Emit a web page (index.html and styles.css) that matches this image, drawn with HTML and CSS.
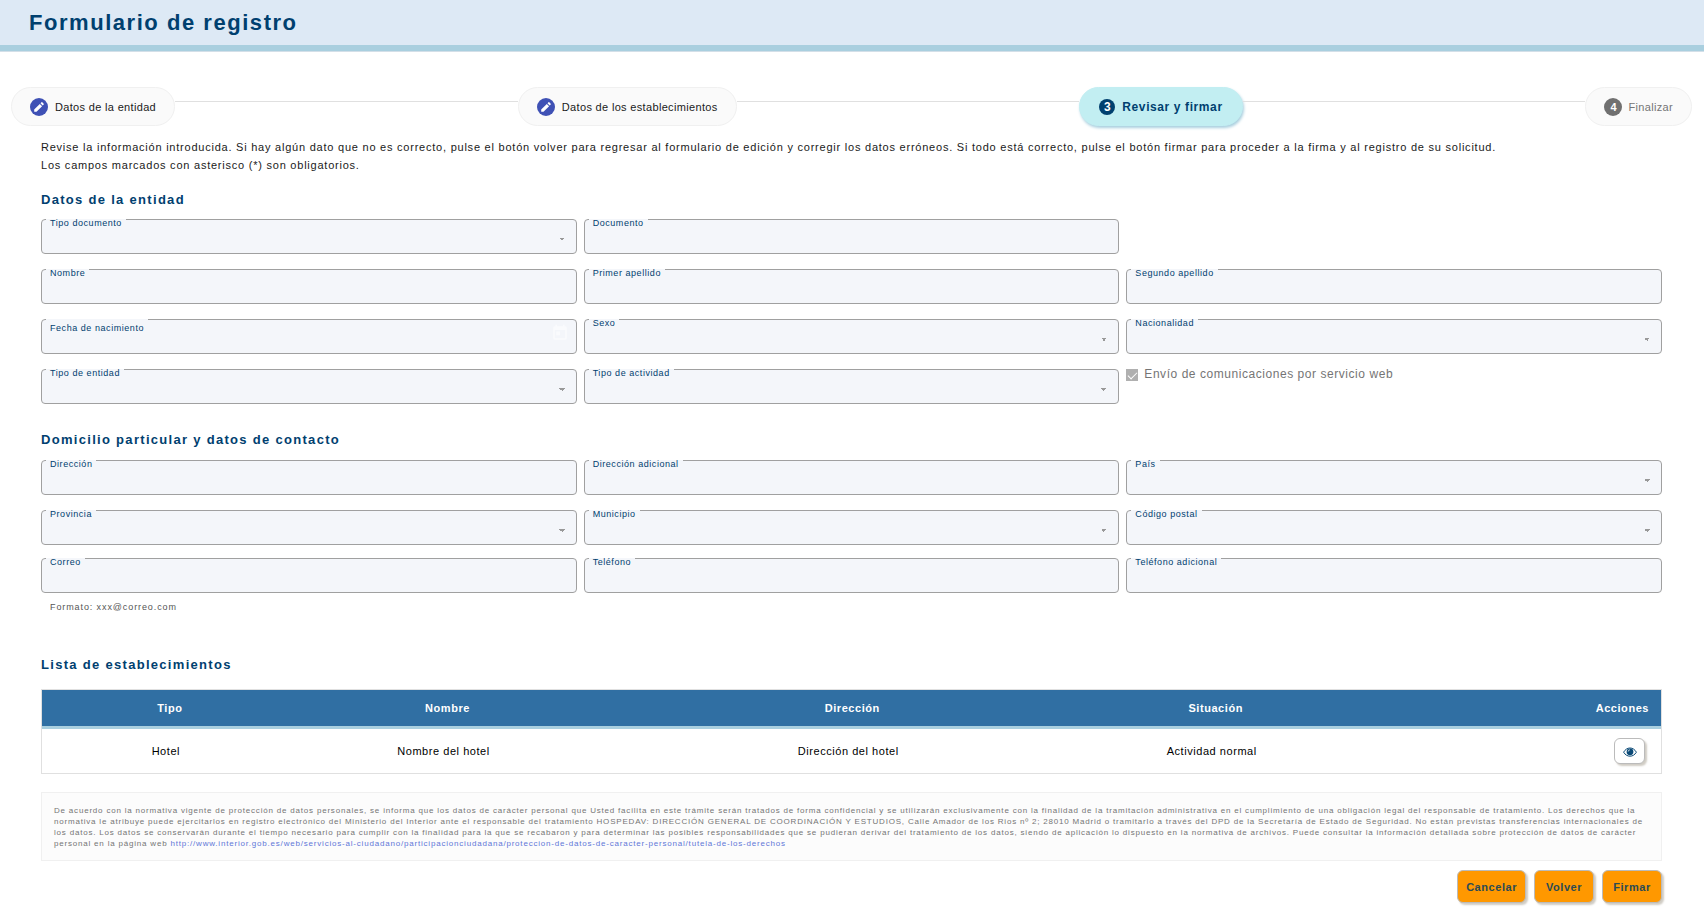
FILE: index.html
```html
<!DOCTYPE html>
<html lang="es">
<head>
<meta charset="utf-8">
<meta name="viewport" content="width=device-width, initial-scale=1">
<title>Formulario de registro</title>
<link rel="stylesheet" href="styles.css">
</head>
<body>
<header class="page-header">
  <h1 class="page-title">Formulario de registro</h1>
</header>

<main>
  <ol class="stepper">
    <li class="step step-done">
      <svg class="step-icon" viewBox="0 0 18 18" aria-hidden="true"><circle cx="9" cy="9" r="9" fill="#3f51b5"/><path d="M4.200 11.500v2.300h2.300l5.600-5.600-2.300-2.300zM13.700 6.500a.6.6 0 0 0 0-.8l-1.400-1.400a.6.6 0 0 0-.8 0l-1 1 2.200 2.200z" fill="#fff"/></svg>
      <span>Datos de la entidad</span>
    </li>
    <li class="step-line" role="presentation"></li>
    <li class="step step-done">
      <svg class="step-icon" viewBox="0 0 18 18" aria-hidden="true"><circle cx="9" cy="9" r="9" fill="#3f51b5"/><path d="M4.200 11.500v2.300h2.300l5.600-5.600-2.300-2.300zM13.700 6.500a.6.6 0 0 0 0-.8l-1.400-1.400a.6.6 0 0 0-.8 0l-1 1 2.200 2.200z" fill="#fff"/></svg>
      <span>Datos de los establecimientos</span>
    </li>
    <li class="step-line" role="presentation"></li>
    <li class="step step-current" aria-current="step">
      <span class="step-number">3</span>
      <span>Revisar y firmar</span>
    </li>
    <li class="step-line" role="presentation"></li>
    <li class="step step-pending">
      <span class="step-number">4</span>
      <span>Finalizar</span>
    </li>
  </ol>

  <div class="content">
    <p class="intro">Revise la información introducida. Si hay algún dato que no es correcto, pulse el botón volver para regresar al formulario de edición y corregir los datos erróneos. Si todo está correcto, pulse el botón firmar para proceder a la firma y al registro de su solicitud.<br>Los campos marcados con asterisco (*) son obligatorios.</p>

    <section>
      <h2 class="section-title">Datos de la entidad</h2>
      <div class="fields">
        <div class="field"><label for="tipo-doc">Tipo documento</label><select id="tipo-doc" class="control select" disabled></select></div>
        <div class="field"><label for="documento">Documento</label><input id="documento" class="control" type="text" disabled></div>

        <div class="field field-first"><label for="nombre">Nombre</label><input id="nombre" class="control" type="text" disabled></div>
        <div class="field"><label for="apellido1">Primer apellido</label><input id="apellido1" class="control" type="text" disabled></div>
        <div class="field"><label for="apellido2">Segundo apellido</label><input id="apellido2" class="control" type="text" disabled></div>

        <div class="field field-date">
          <label for="nacimiento">Fecha de nacimiento</label><input id="nacimiento" class="control" type="text" disabled>
          <svg class="calendar" viewBox="0 0 24 24" aria-hidden="true"><path fill="#fafbfd" fill-rule="evenodd" d="M19 3h-1V1h-2v2H8V1H6v2H5a2 2 0 0 0-2 2v14a2 2 0 0 0 2 2h14a2 2 0 0 0 2-2V5a2 2 0 0 0-2-2zm0 16H5V8h14zM7 10h5v5H7z"/></svg>
        </div>
        <div class="field"><label for="sexo">Sexo</label><select id="sexo" class="control select" disabled></select></div>
        <div class="field"><label for="nacionalidad">Nacionalidad</label><select id="nacionalidad" class="control select" disabled></select></div>

        <div class="field"><label for="entidad">Tipo de entidad</label><select id="entidad" class="control select" disabled></select></div>
        <div class="field"><label for="actividad">Tipo de actividad</label><select id="actividad" class="control select" disabled></select></div>
        <div class="check"><input id="envio" class="check-box" type="checkbox" checked disabled><label for="envio">Envío de comunicaciones por servicio web</label></div>
      </div>
    </section>

    <section>
      <h2 class="section-title section-contact">Domicilio particular y datos de contacto</h2>
      <div class="fields">
        <div class="field"><label for="direccion">Dirección</label><input id="direccion" class="control" type="text" disabled></div>
        <div class="field"><label for="direccion2">Dirección adicional</label><input id="direccion2" class="control" type="text" disabled></div>
        <div class="field"><label for="pais">País</label><select id="pais" class="control select" disabled></select></div>

        <div class="field"><label for="provincia">Provincia</label><select id="provincia" class="control select" disabled></select></div>
        <div class="field"><label for="municipio">Municipio</label><select id="municipio" class="control select" disabled></select></div>
        <div class="field"><label for="cp">Código postal</label><select id="cp" class="control select" disabled></select></div>
      </div>
      <div class="fields fields-phone">
        <div class="field"><label for="correo">Correo</label><input id="correo" class="control" type="email" aria-describedby="correo-hint" disabled></div>
        <div class="field"><label for="telefono">Teléfono</label><input id="telefono" class="control" type="tel" disabled></div>
        <div class="field"><label for="telefono2">Teléfono adicional</label><input id="telefono2" class="control" type="tel" disabled></div>
      </div>
      <p class="hint" id="correo-hint">Formato: xxx@correo.com</p>
    </section>

    <section>
      <h2 class="section-title section-list">Lista de establecimientos</h2>
      <table class="list">
        <thead>
          <tr><th class="col-tipo">Tipo</th><th class="col-nombre">Nombre</th><th class="col-direccion">Dirección</th><th class="col-situacion">Situación</th><th class="col-acciones">Acciones</th></tr>
        </thead>
        <tbody>
          <tr>
            <td>Hotel</td><td>Nombre del hotel</td><td>Dirección del hotel</td><td>Actividad normal</td>
            <td class="col-acciones"><button class="view" type="button" aria-label="Ver"><svg viewBox="0 0 14 10" width="14" height="10" aria-hidden="true"><path d="M.6 5.200C2.200 2.500 4.400 1 7 1s4.800 1.500 6.400 4.200C11.800 7.800 9.600 9.200 7 9.200S2.200 7.800.6 5.200z" fill="#fff" stroke="#0b4a77"/><circle cx="7" cy="4.800" r="3.400" fill="#0b4a77"/><path d="M5.200 4.600A1.800 1.800 0 0 1 7 2.800" fill="none" stroke="#fff" stroke-width=".7"/></svg></button></td>
          </tr>
        </tbody>
      </table>
    </section>

    <p class="legal">De acuerdo con la normativa vigente de protección de datos personales, se informa que los datos de carácter personal que Usted facilita en este trámite serán tratados de forma confidencial y se utilizarán exclusivamente con la finalidad de la tramitación administrativa en el cumplimiento de una obligación legal del responsable de tratamiento. Los derechos que la normativa le atribuye puede ejercitarlos en registro electrónico del Ministerio del Interior ante el responsable del tratamiento HOSPEDAV: DIRECCIÓN GENERAL DE COORDINACIÓN Y ESTUDIOS, Calle Amador de los Rios nº 2; 28010 Madrid o tramitarlo a través del DPD de la Secretaría de Estado de Seguridad. No están previstas transferencias internacionales de los datos. Los datos se conservarán durante el tiempo necesario para cumplir con la finalidad para la que se recabaron y para determinar las posibles responsabilidades que se pudieran derivar del tratamiento de los datos, siendo de aplicación lo dispuesto en la normativa de archivos. Puede consultar la información detallada sobre protección de datos de carácter personal en la página web <a href="http://www.interior.gob.es/web/servicios-al-ciudadano/participacionciudadana/proteccion-de-datos-de-caracter-personal/tutela-de-los-derechos">http://www.interior.gob.es/web/servicios-al-ciudadano/participacionciudadana/proteccion-de-datos-de-caracter-personal/tutela-de-los-derechos</a></p>

    <div class="actions">
      <button class="action" type="button">Cancelar</button>
      <button class="action" type="button">Volver</button>
      <button class="action" type="button">Firmar</button>
    </div>
  </div>
</main>
</body>
</html>
```

FILE: styles.css
```css
:root {
  --navy: #00406f;
  --field: #f4f6fa;
  --line: #a0a0a0;
  --tracking: 0.05em;
  --tracking-text: 0.07em;
  --tracking-wide: 0.1em;
}

* { box-sizing: border-box; }

body {
  margin: 0;
  background: #fff;
  color: #1a1a1a;
  font-family: "Liberation Sans", Arial, sans-serif;
  font-size: 11px;
  letter-spacing: var(--tracking);
}

button, input, select { font: inherit; letter-spacing: inherit; }

.page-header {
  padding: 8px 29px 7px;
  background: #dde9f5;
  border-bottom: 6px solid #a9cfdf;
  box-shadow: 0 1px 0 #d3dfe8;
}

.page-title {
  margin: 0;
  color: var(--navy);
  font-size: 22px;
  line-height: 30px;
  letter-spacing: var(--tracking-text);
}

/* Stepper */
.stepper {
  display: flex;
  margin: 0;
  padding: 36px 12px 0 11px;
  list-style: none;
}

.step {
  display: flex;
  align-items: center;
  gap: 7px;
  height: 39px;
  padding: 0 18px;
  border: 1px solid #f0f0f0;
  border-radius: 20px;
  background: #fafafa;
  letter-spacing: 0.03em;
  white-space: nowrap;
}

.step-icon { width: 18px; height: 18px; }

.step-line {
  flex: 1;
  height: 1px;
  margin-top: 14px;
  background: #e0e0e0;
}

.step-number {
  display: flex;
  align-items: center;
  justify-content: center;
  width: 18px;
  height: 18px;
  border-radius: 50%;
  background: #707070;
  color: #fff;
  font-weight: bold;
  letter-spacing: 0;
}

.step-current {
  padding: 0 19px;
  border-color: #c2eef2;
  background: #c2eef2;
  box-shadow: 1px 2px 3px #a9cfdf;
  color: var(--navy);
  font-size: 12px;
  font-weight: bold;
  letter-spacing: var(--tracking);
}

.step-current .step-number {
  width: 16px;
  height: 16px;
  background: var(--navy);
}

.step-pending {
  gap: 6px;
  color: #757575;
}

/* Content */
.content { padding: 12px 42px 0 41px; }

.intro {
  margin: 0;
  line-height: 18px;
  letter-spacing: var(--tracking-text);
}

.section-title {
  margin: 17px 0 10px;
  color: var(--navy);
  font-size: 13px;
  line-height: 18px;
  letter-spacing: var(--tracking-wide);
}

.section-contact { margin: 27px 0 11px; }

.section-list { margin: 43px 0 15px; }

.fields {
  display: grid;
  grid-template-columns: repeat(3, 1fr);
  gap: 15px 7px;
}

.fields-phone { margin-top: 13px; }

.field { position: relative; }

.field-first { grid-column-start: 1; }

.field label {
  position: absolute;
  top: 0;
  left: 5px;
  padding: 0 4px;
  background: var(--field);
  color: var(--navy);
  font-size: 9px;
  line-height: 9px;
}

.field-date label { padding-top: 5px; }

.control {
  display: block;
  width: 100%;
  height: 35px;
  padding: 8px 8px 0;
  border: 1px solid var(--line);
  border-radius: 4px;
  background: var(--field);
  opacity: 1;
}

.select {
  appearance: none;
  background: linear-gradient(to bottom left, #999 50%, transparent 50%) right 14px top 18px / 3px 3px no-repeat,
    linear-gradient(to bottom right, #999 50%, transparent 50%) right 11px top 18px / 3px 3px no-repeat,
    var(--field);
}

.calendar {
  position: absolute;
  top: 5px;
  right: 8px;
  width: 18px;
  height: 18px;
}

.check {
  display: flex;
  align-items: flex-start;
  gap: 6px;
  color: #757575;
  font-size: 12px;
  line-height: 10px;
}

.check-box {
  display: flex;
  justify-content: center;
  appearance: none;
  width: 12px;
  height: 12px;
  margin: 0;
  background: #b0b0b0;
}

.check-box:checked::after {
  content: "";
  width: 4px;
  height: 8px;
  margin-top: 1px;
  border: solid #fff;
  border-width: 0 1px 1px 0;
  transform: rotate(45deg);
}

.hint {
  margin: 8px 9px 0;
  color: #555;
  font-size: 9px;
  line-height: 12px;
  letter-spacing: var(--tracking-wide);
}

/* Establishments */
.list {
  width: 100%;
  border: 1px solid #e0e0e0;
  border-collapse: separate;
  border-spacing: 0;
  table-layout: fixed;
  color: #000;
  text-align: center;
}

.list th {
  height: 39px;
  padding: 0 0 0 8px;
  border-bottom: 3px solid #a9cfdf;
  background: #306fa3;
  color: #fff;
}

.list td { height: 44px; padding: 0; }

.col-tipo { width: 15.3%; }
.col-nombre { width: 19%; }
.col-direccion { width: 31%; }
.col-situacion { width: 13.9%; }

.list th.col-acciones { padding-right: 12px; text-align: right; }
.list td.col-acciones { padding-right: 16px; text-align: right; }

.view {
  display: inline-flex;
  align-items: center;
  justify-content: center;
  width: 31px;
  height: 26px;
  padding: 2px 0 0;
  border: 1px solid #bbb;
  border-radius: 6px;
  background: #fff;
  box-shadow: 2px 2px 2px #d0ccc4;
  vertical-align: middle;
}

.legal {
  margin: 18px 0 0;
  padding: 12px 12px 11px;
  border: 1px solid #f0f0f0;
  background: #fcfcfc;
  color: #757575;
  font-size: 8px;
  line-height: 11px;
  letter-spacing: var(--tracking-wide);
}

.legal a { color: #5f77d8; text-decoration: none; }

.actions {
  display: flex;
  justify-content: flex-end;
  gap: 8px;
  padding: 9px 0 8px;
}

.action {
  min-width: 60px;
  height: 33px;
  padding: 0 8px;
  border: 1px solid #bbb;
  border-radius: 6px;
  background: #ff9800;
  box-shadow: 2px 2px 2px #d0ccc4;
  color: #2b4b55;
  font-weight: bold;
}
```
